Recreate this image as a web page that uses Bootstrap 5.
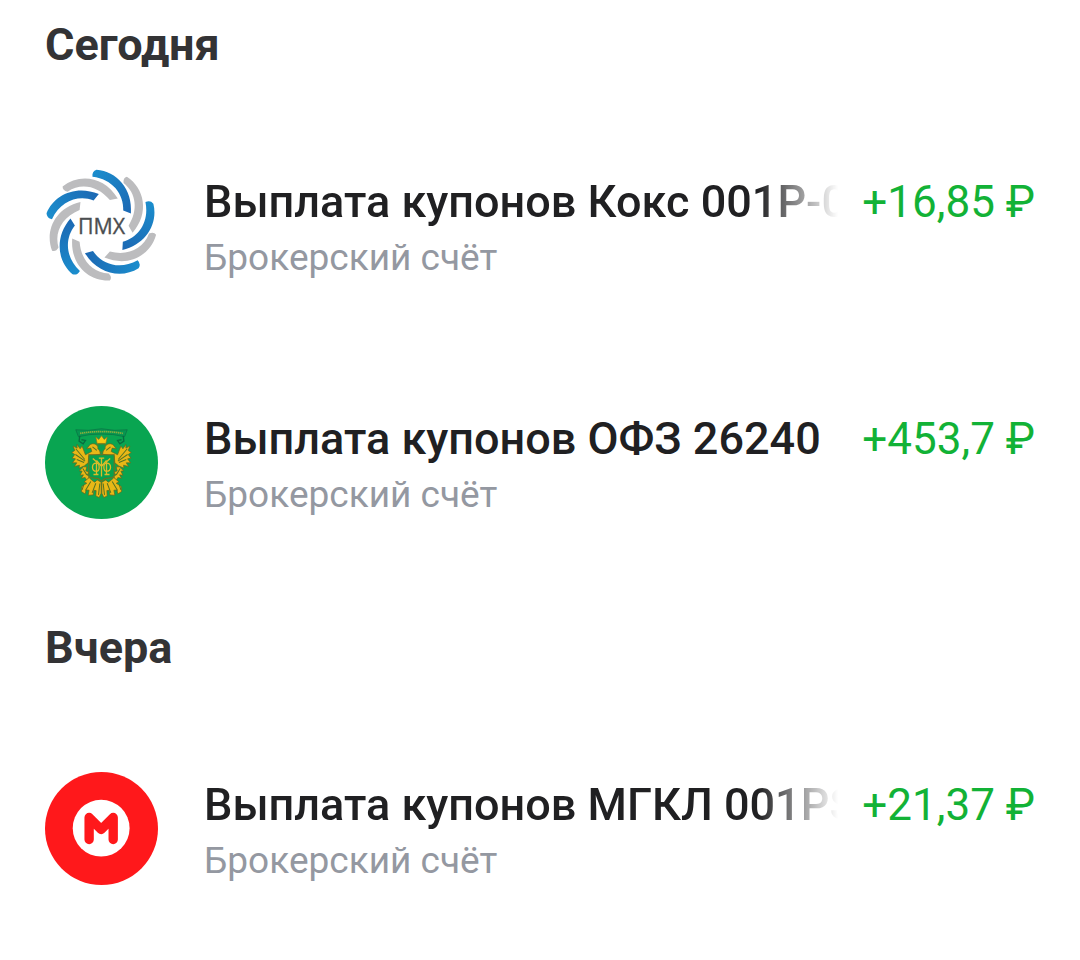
<!DOCTYPE html>
<html lang="ru">
<head>
<meta charset="utf-8">
<meta name="viewport" content="width=device-width, initial-scale=1">
<title>История операций</title>
<link href="https://cdn.jsdelivr.net/npm/bootstrap@5.3.0/dist/css/bootstrap.min.css" rel="stylesheet">
<style>
  body { font-family: Roboto, "Noto Sans", sans-serif; background: #fff; color: #202022; }
  .feed { padding: 19px 45px 0; }
  .day + .day { margin-top: 41px; }
  .day-title { font-size: 45px; line-height: 52px; font-weight: 700; color: #333335; margin-bottom: 36px; }
  .operation { height: 237px; }
  .logo { width: 113px; height: 113px; margin-right: 46px; }
  .op-text { padding-top: 8px; }
  .op-title { font-size: 45px; line-height: 56px; font-weight: 500; }
  .op-title.faded { -webkit-mask-image: linear-gradient(to left, transparent, #000 80px); mask-image: linear-gradient(to left, transparent, #000 80px); }
  .op-account { font-size: 37px; line-height: 56px; color: #9498a1; }
  .op-sum { font-size: 44px; line-height: 56px; color: #12b236; margin-left: 24px; }
</style>
</head>
<body>
<main class="feed container-fluid">
  <section class="day">
    <h2 class="day-title">Сегодня</h2>
    <ul class="list-unstyled mb-0">
      <li class="operation d-flex align-items-center">
        <svg class="logo flex-shrink-0" viewBox="28 25 338 338" role="img" aria-label="ПМХ">
          <defs>
            <linearGradient id="blade" x1="0" y1="0" x2="1" y2="1"><stop offset="0" stop-color="#1b8fce"/><stop offset="1" stop-color="#1c68b3"/></linearGradient>
            <g id="pair">
              <path fill="url(#blade)" d="M182 27C242 31 291 85 285 158L262 149C264 100 230 55 170 48Q168 32 182 27Z"/>
              <path fill="#bcbcbe" d="M273 48C325 82 342 155 290 216L278 195C307 148 302 98 263 67Q261 51 273 48Z"/>
            </g>
          </defs>
          <use href="#pair"/>
          <use href="#pair" transform="rotate(72 197 195)"/>
          <use href="#pair" transform="rotate(144 197 195)"/>
          <use href="#pair" transform="rotate(216 197 195)"/>
          <use href="#pair" transform="rotate(288 197 195)"/>
          <text x="197" y="218" text-anchor="middle" font-family="Open Sans, sans-serif" font-size="64" font-weight="500" fill="#4b4e50" stroke="#4b4e50" stroke-width="1">ПМХ</text>
        </svg>
        <div class="op-text flex-grow-1 overflow-hidden">
          <div class="d-flex justify-content-between">
            <div class="op-title faded flex-grow-1 text-nowrap overflow-hidden">Выплата купонов Кокс 001P-0</div>
            <div class="op-sum text-nowrap">+16,85 ₽</div>
          </div>
          <div class="op-account">Брокерский счёт</div>
        </div>
      </li>
      <li class="operation d-flex align-items-center">
        <svg class="logo flex-shrink-0" viewBox="28 25 338 338" role="img" aria-label="Министерство финансов">
          <circle cx="197" cy="194" r="169" fill="#09a551"/>
          <!-- ribbon -->
          <path d="M120 96Q157 101 197 93Q237 101 274 96L266 117Q232 108 197 109Q162 108 128 117Z" fill="#079650" stroke="#0a6f44" stroke-width="2"/>
          <path d="M133 107Q165 101 197 102Q229 101 261 107" fill="none" stroke="#8fae3c" stroke-width="5" stroke-dasharray="4 2"/>
          <path d="M132 114l-2 16 12 8 7-10-12-2M262 114l2 16-12 8-7-10 12-2" fill="none" stroke="#086c40" stroke-width="4"/>
          <g id="wing" fill="#e8b817" stroke="#66611b" stroke-width="2" stroke-linejoin="round">
            <path d="M194 169L190 151Q179 132 163 140L153 153L165 151L168 161L149 171L139 145L133 153L124 140L124 151L112 145L117 158L108 164L117 170L109 181L119 183L110 195L123 195L116 206L131 202L130 211L146 204L157 195L159 175Z"/>
            <path d="M143 207L131 219L139 220L133 232L143 231L137 241L148 239L154 249L160 237L153 230L162 225L150 219L153 207Z"/>
            <path d="M160 239L145 252L153 256L138 266L137 281L148 288L151 276L160 277L157 292L172 291L174 277L181 278L180 294L190 299L196 286L196 253L184 246L177 253L168 247Z"/>
            <path d="M120 153L147 185M119 170L148 190M123 185L145 194M170 147L183 158M165 251L149 278M180 256L169 285M192 257L188 291" fill="none" stroke="#557323" stroke-width="3"/>
            <path d="M141 212L153 231M144 260L139 276" fill="none" stroke="#557323" stroke-width="3"/>
          </g>
          <use href="#wing" transform="translate(394 0) scale(-1 1)"/>
          <path d="M184 137L180 118L189 125L197 114L205 125L214 118L210 137Z" fill="#f6c913" stroke="#8c751b" stroke-width="2"/>
          <path d="M186 139h22v14l-11 12-11-12Z" fill="#0a9e4d" stroke="#76751c" stroke-width="2"/>
          <path d="M159 171H235V232Q234 239 221 240L207 242L197 250L187 242L173 240Q160 239 159 232Z" fill="#07a14d" stroke="#786e1c" stroke-width="3"/>
          <g fill="none" stroke="#dcbc29" stroke-width="4">
            <path d="M171 182L182 192V230M223 182L212 192V230M173 230H188M206 230H221M182 188L197 206L212 188M197 180V236M189 181H205"/>
            <path d="M182 196C166 196 166 220 182 220Q190 220 190 208Q190 196 182 196ZM212 196C228 196 228 220 212 220Q204 220 204 208Q204 196 212 196Z"/>
          </g>
        </svg>
        <div class="op-text flex-grow-1 overflow-hidden">
          <div class="d-flex justify-content-between">
            <div class="op-title flex-grow-1 text-nowrap overflow-hidden">Выплата купонов ОФЗ 26240</div>
            <div class="op-sum text-nowrap">+453,7 ₽</div>
          </div>
          <div class="op-account">Брокерский счёт</div>
        </div>
      </li>
    </ul>
  </section>
  <section class="day">
    <h2 class="day-title">Вчера</h2>
    <ul class="list-unstyled mb-0">
      <li class="operation d-flex align-items-center">
        <svg class="logo flex-shrink-0" viewBox="28 25 338 338" role="img" aria-label="МГКЛ">
          <circle cx="197" cy="194" r="169" fill="#ff181b"/>
          <circle cx="196" cy="193" r="85" fill="#fff"/>
          <path d="M160 227V161L196 197L232 161V227" fill="none" stroke="#ff181b" stroke-width="28" stroke-linecap="round" stroke-linejoin="round"/>
        </svg>
        <div class="op-text flex-grow-1 overflow-hidden">
          <div class="d-flex justify-content-between">
            <div class="op-title faded flex-grow-1 text-nowrap overflow-hidden">Выплата купонов МГКЛ 001PS</div>
            <div class="op-sum text-nowrap">+21,37 ₽</div>
          </div>
          <div class="op-account">Брокерский счёт</div>
        </div>
      </li>
    </ul>
  </section>
</main>
<script src="https://cdn.jsdelivr.net/npm/bootstrap@5.3.0/dist/js/bootstrap.bundle.min.js"></script>
</body>
</html>
